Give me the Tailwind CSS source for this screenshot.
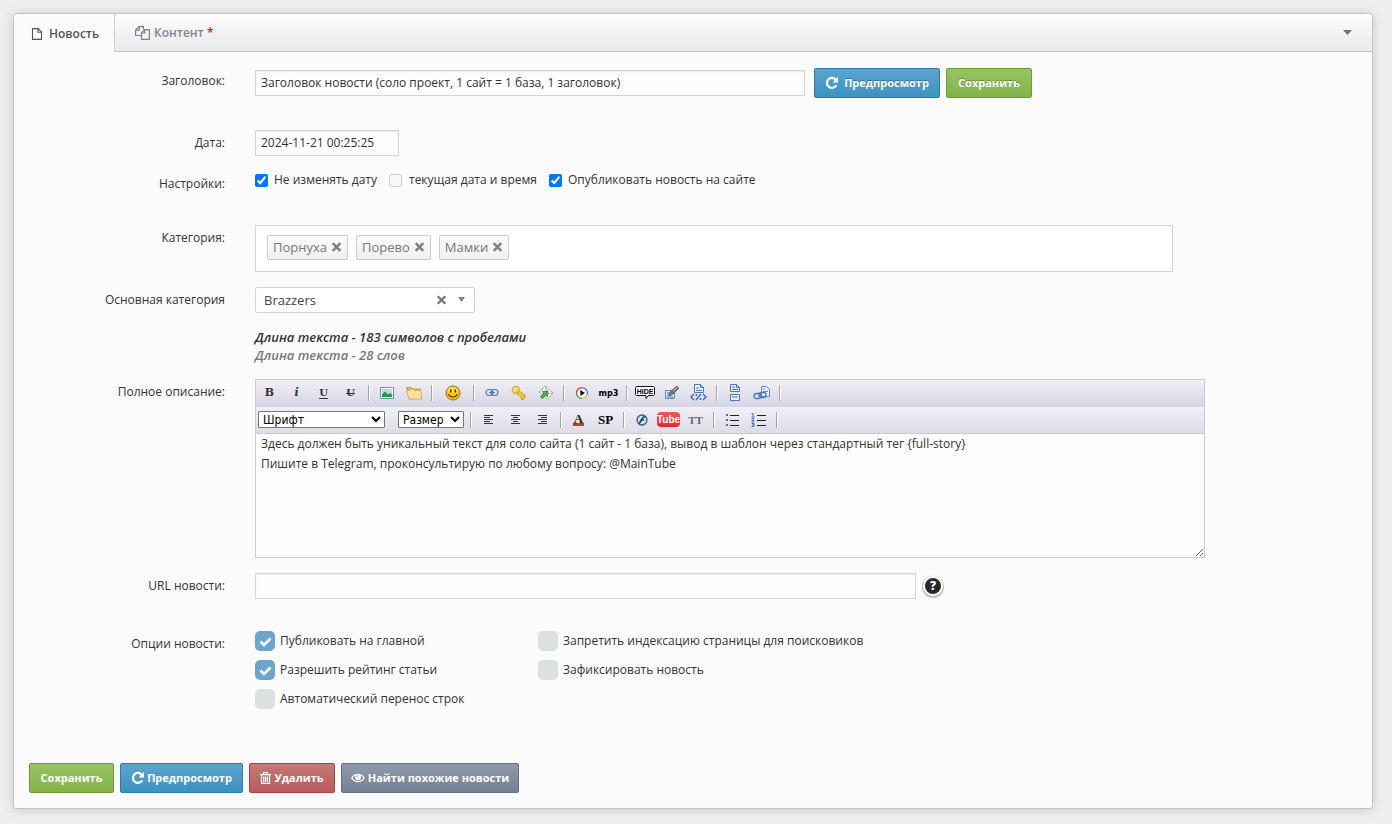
<!DOCTYPE html>
<html lang="ru">
<head>
<meta charset="utf-8">
<title>Редактирование новости</title>
<script src="https://cdn.jsdelivr.net/npm/@tailwindcss/browser@4"></script>
</head>
<body class="min-h-screen bg-[#efefef] px-[13px] pt-[13px] pb-4 text-[12px] leading-[18px] text-[#333]" style="font-family:'Open Sans','Noto Sans',sans-serif">
<main class="mr-[6px] rounded-[3px] border border-[#c5c5c5] bg-[#fbfbfb] shadow-[0_1px_12px_rgba(0,0,0,0.16)]">
  <header class="flex h-[38px] rounded-t-[3px] border-b border-[#c8c8c8] bg-linear-to-b from-[#fdfdfd] to-[#e9e9e9]">
    <button class="-mb-px flex w-[101px] items-center gap-1.5 rounded-tl-[3px] border-r border-[#cdcdcd] bg-[#fbfbfb] pt-px pl-[17px] font-semibold text-[#555]">
      <svg class="h-3 w-3" viewBox="0 0 12 12" fill="none" stroke="#555" stroke-width="1.1"><path d="M1.5.6h5.7l3.3 3.3v7.5h-9zM7 .8v3.4h3.4"/></svg>
      Новость
    </button>
    <button class="flex items-center gap-1 pt-px pl-5 font-semibold text-[#808690]">
      <svg class="h-3.5 w-[15px]" viewBox="0 0 15 14" fill="none" stroke="#7b8390" stroke-width="1.2"><path d="M6 9.500H.6V4L4 .6h4.400v3M4.200.8v3.400H.8M6.500 6.800 9.700 3.600h4.700v9.800H6.500zM9.900 3.800v3.200H6.700"/></svg>
      <span>Контент <span class="text-[#f00]">*</span></span>
    </button>
    <button aria-label="Меню" class="mr-5 ml-auto"><svg class="h-[5px] w-[9px]" viewBox="0 0 9 5"><path d="M0 0h9L4.500 5z" fill="#6b7482"/></svg></button>
  </header>

  <form class="px-[15px] pt-4 pb-[15px]">
    <div class="grid grid-cols-[196px_minmax(0,1fr)] gap-x-[30px]">
      <label for="title" class="pt-1 text-right">Заголовок:</label>
      <div class="mb-8 flex h-[30px] items-center">
        <input id="title" class="h-[26px] w-[550px] border border-[#d5d5d5] bg-[#fdfdfd] px-[5px] pb-px shadow-[inset_0_1px_1px_rgba(0,0,0,0.08)]" value="Заголовок новости (соло проект, 1 сайт = 1 база, 1 заголовок)">
        <button type="button" class="ml-[9px] flex h-[30px] w-[126px] items-center justify-center gap-[5px] rounded-[2px] border border-[#2f7ba5] bg-linear-to-b from-[#5ba5cc] to-[#3c92c1] text-[11px] font-bold text-white [text-shadow:0_-1px_0_rgba(0,0,0,0.3)]">
          <svg class="h-3.5 w-3.5" viewBox="0 0 14 14"><path d="M11.300 9.300A5 5 0 1 1 10.800 3.700" fill="none" stroke="#fff" stroke-width="2.200"/><path d="M13 1v5.500H7.500z" fill="#fff"/></svg>
          Предпросмотр</button>
        <button type="button" class="ml-1.5 h-[30px] w-[86px] rounded-[2px] border border-[#6f9a35] bg-linear-to-b from-[#98c363] to-[#82b447] text-[11px] font-bold text-white [text-shadow:0_-1px_0_rgba(0,0,0,0.3)]">Сохранить</button>
      </div>

      <label for="date" class="pt-1 text-right">Дата:</label>
      <div class="mb-[15px]"><input id="date" class="block h-[26px] w-36 border border-[#d5d5d5] bg-[#fdfdfd] px-[5px] pb-px shadow-[inset_0_1px_1px_rgba(0,0,0,0.08)]" value="2024-11-21 00:25:25"></div>

      <div class="pt-1 text-right">Настройки:</div>
      <div class="mb-9 flex h-[18px] items-center">
        <label class="flex items-center gap-1.5"><input type="checkbox" checked class="h-[13px] w-[13px]">Не изменять дату</label>
        <label class="ml-3 flex items-center gap-[7px]"><input type="checkbox" disabled class="h-[13px] w-[13px]">текущая дата и время</label>
        <label class="ml-3 flex items-center gap-1.5"><input type="checkbox" checked class="h-[13px] w-[13px]">Опубликовать новость на сайте</label>
      </div>

      <div class="pt-1 text-right">Категория:</div>
      <div class="mb-[15px] flex h-[47px] w-[918px] items-start gap-2 border border-[#d5d5d5] bg-white px-[11px] pt-[9px] text-[13px] text-[#777]">
        <span class="flex h-[25px] items-center gap-1 rounded-[2px] border border-[#ccc] bg-linear-to-b from-[#fbfbfb] to-[#f0f0f0] px-[5px] pb-px">Порнуха<button type="button" aria-label="Убрать Порнуха"><svg class="h-[10px] w-[11px]" viewBox="0 0 10 10"><path d="m1.200 1.200 7.600 7.600m0-7.600L1.200 8.800" stroke="#808080" stroke-width="2.500"/></svg></button></span>
        <span class="flex h-[25px] items-center gap-1 rounded-[2px] border border-[#ccc] bg-linear-to-b from-[#fbfbfb] to-[#f0f0f0] px-[5px] pb-px">Порево<button type="button" aria-label="Убрать Порево"><svg class="h-[10px] w-[11px]" viewBox="0 0 10 10"><path d="m1.200 1.200 7.600 7.600m0-7.600L1.200 8.800" stroke="#808080" stroke-width="2.500"/></svg></button></span>
        <span class="flex h-[25px] items-center gap-1 rounded-[2px] border border-[#ccc] bg-linear-to-b from-[#fbfbfb] to-[#f0f0f0] px-[5px] pb-px">Мамки<button type="button" aria-label="Убрать Мамки"><svg class="h-[10px] w-[11px]" viewBox="0 0 10 10"><path d="m1.200 1.200 7.600 7.600m0-7.600L1.200 8.800" stroke="#808080" stroke-width="2.500"/></svg></button></span>
      </div>

      <label for="maincat" class="pt-1 text-right">Основная категория</label>
      <div class="relative mb-[15px] h-[26px] w-[220px]">
        <select id="maincat" class="block h-[26px] w-full appearance-none rounded-[2px] border border-[#d5d5d5] bg-white px-2 text-[13px] text-[#444]"><option>Brazzers</option></select>
        <button type="button" aria-label="Очистить" class="absolute top-2 right-7"><svg class="block h-[10px] w-[11px]" viewBox="0 0 10 10"><path d="m1.200 1.200 7.600 7.600m0-7.600L1.200 8.800" stroke="#777" stroke-width="2.300"/></svg></button>
        <svg class="pointer-events-none absolute top-[10px] right-[10px] h-[5px] w-[7px]" viewBox="0 0 7 5"><path d="M0 0h7L3.500 5z" fill="#808080"/></svg>
      </div>

      <div></div>
      <div class="mb-[15px] text-[13px] font-semibold italic"><p>Длина текста - 183 символов с пробелами</p><p class="text-[#777]">Длина текста - 28 слов</p></div>

      <label for="story" class="pt-1 text-right">Полное описание:</label>
      <div class="mb-[15px] w-[950px] border border-[#ccc]">
        <div class="flex h-[27px] items-center bg-linear-to-b from-[#f1f0f7] to-[#d5d4e3] pb-0.5 text-[#333] [&>button]:flex [&>button]:h-[25px] [&>button]:w-[27px] [&>button]:shrink-0 [&>button]:items-center [&>button]:justify-center [&>i]:mx-1 [&>i]:h-4 [&>i]:w-px [&>i]:shrink-0 [&>i]:bg-[#a4a4ae] [&>i]:shadow-[1px_0_0_#fff]">
          <button type="button" aria-label="Жирный" class="font-['DejaVu_Serif'] text-[11px] font-bold">B</button>
          <button type="button" aria-label="Курсив" class="font-['DejaVu_Serif'] text-[11px] font-bold italic">i</button>
          <button type="button" aria-label="Подчёркнутый" class="font-['DejaVu_Serif'] text-[10px] font-bold underline underline-offset-2">U</button>
          <button type="button" aria-label="Зачёркнутый" class="font-['DejaVu_Serif'] text-[10px] font-bold line-through">U</button>
          <i></i>
          <button type="button" aria-label="Картинка"><svg width="14" height="14" viewBox="1 1 14 14"><path d="M1.500 2.500h13v11h-13z" fill="#fff" stroke="#6d93b5"/><path d="M3 4h10v8H3z" fill="#a9ddf6"/><circle cx="11" cy="5.500" r="1.500" fill="#ffd94a"/><path d="M3 12V9.500l3-3 3 3 2-1.500 2 1.500V12z" fill="#269a37"/></svg></button>
          <button type="button" aria-label="Файлы"><svg width="18" height="16" viewBox="0 0 18 16"><path d="M1.500 2.500h5l1.500 1.500h7.500v9h-11z" fill="#e3b767" stroke="#c99a4c"/><path d="m4 14-2.500-8.500h3l1-1.500h3l1 1.500h6.500l.5 8.500z" fill="#fae0a5" stroke="#d2a04d" stroke-width=".8"/></svg></button>
          <i></i>
          <button type="button" aria-label="Смайлы" class="mx-[3px]"><svg width="16" height="16" viewBox="0 0 16 16"><circle cx="8" cy="8" r="7" fill="#fbc70f" stroke="#a36b0b"/><ellipse cx="7.500" cy="5" rx="5" ry="3" fill="#ffe96b" opacity=".7"/><path d="M5.800 4.500v3M10.200 4.500v3" stroke="#4e3205" stroke-width="1.500"/><path d="M3.500 9c1.500 4 7.500 4 9 0" fill="none" stroke="#6b4308" stroke-width="1.200"/></svg></button>
          <i></i>
          <button type="button" aria-label="Ссылка"><svg width="14" height="9" viewBox="0 0 14 9" fill="none" stroke="#527fc0" stroke-width="1.200"><rect x="1" y="1.500" width="7" height="6" rx="3"/><rect x="6" y="1.500" width="7" height="6" rx="3"/><path d="M4 4.500h6"/></svg></button>
          <button type="button" aria-label="Ключ"><svg width="16" height="16" viewBox="0 0 16 16"><path d="m7.500 5.500 7 5-.5 2-1.500 0 0 2-2 0-.5-2.500-4-3z" fill="#f6c52c" stroke="#c78f16" stroke-width=".8"/><path d="M2 2.500 4.500 1l3 1 .8 3L6 8l-3 .5L1 6z" fill="#ffd64b" stroke="#c78f16" stroke-width=".8"/><circle cx="3.800" cy="3.900" r="1" fill="#fff"/></svg></button>
          <button type="button" aria-label="Защищённая ссылка"><svg width="16" height="16" viewBox="0 0 16 16"><path d="m7 1 8 7-5.500 6.500L1 7z" fill="#fff" stroke="#909aa2" stroke-width=".8"/><path d="m7 1 2.500 8 5.500-1" fill="none" stroke="#9ba5aa" stroke-width=".8"/><path d="m2.500 12 3.500-4-2-1.500 6-.5-.5 6L8 10l-3.500 3.500z" fill="#52a851" stroke="#2c7632" stroke-width=".7"/></svg></button>
          <i></i>
          <button type="button" aria-label="Видео"><svg width="12" height="12" viewBox="1 1 12 12" fill="none" stroke-width="1.400"><path d="M2 9A5.300 5.300 0 0 1 7 1.700" stroke="#e33931"/><path d="M7 1.700a5.300 5.300 0 0 1 5 7" stroke="#4276dc"/><path d="M12 8.700a5.300 5.300 0 0 1-5 3.600" stroke="#efc22f"/><path d="M7 12.300A5.300 5.300 0 0 1 2 9" stroke="#33a756"/><circle cx="7" cy="7" r="4.500" fill="#fff"/><path d="M5.300 4v6L10 7z" fill="#111"/></svg></button>
          <button type="button" class="font-['DejaVu_Sans_Condensed','DejaVu_Sans'] text-[9px] font-bold text-black">mp3</button>
          <i></i>
          <button type="button" aria-label="Скрытый текст"><svg width="22" height="15" viewBox="0 0 22 15" class="shrink-0"><path d="M2.500 1.500h17l1 1v7l-1 1h-5L12 13.500v-3H2.500l-1-1v-7z" fill="#fff" stroke="#111"/><text x="11" y="8.800" text-anchor="middle" font-family="Liberation Sans" font-size="7" font-weight="bold" fill="#000">HIDE</text></svg></button>
          <button type="button" aria-label="Цитата"><svg width="16" height="16" viewBox="0 0 16 16"><path d="M1.500 5.500h9v8h-9z" fill="#dce9fa" stroke="#648bc1"/><path d="M3 8h6M3 10h4M3 12h6" stroke="#4779bd"/><path d="m5 11 1-4L13 1l2 2-6 6z" fill="#777" stroke="#555" stroke-width=".8"/><path d="m9 6 5-4" stroke="#c4c4c4"/></svg></button>
          <button type="button" aria-label="Исходный код"><svg width="17" height="18" viewBox="0 0 17 18"><path d="M4.500.500h6l3 3v5h-9z" fill="#edf4fd" stroke="#4a77b9"/><path d="M10.500.500v3h3M6 4h3M6 6.500h6" fill="none" stroke="#4a77b9"/><path d="m4 10-3 3 3 3M13 10l3 3-3 3M6 16l5-6" fill="none" stroke="#3566ad" stroke-width="1.300"/><circle cx="6.500" cy="11" r="1" fill="#3566ad"/><circle cx="10.500" cy="15" r="1" fill="#3566ad"/></svg></button>
          <i></i>
          <button type="button" aria-label="Разрыв страницы"><svg width="12" height="18" viewBox="0 0 12 18" fill="#edf4fd" stroke="#4a77b9"><path d="M1.500.500h6l3 3v4h-9zM7.500.500v3h3M3 3h3M3 5.500h6M1.500 10.500h9v6h-9zM3 13h6"/></svg></button>
          <button type="button" aria-label="Ссылка на страницу"><svg width="18" height="16" viewBox="0 0 18 16"><path d="M8.500 1.500h5l3 3v7h-8z" fill="#e7f0fd" stroke="#648bc1"/><path d="M10 4h2M10 6.500h5" stroke="#648bc1"/><g fill="none" stroke="#4779bd" stroke-width="1.300"><rect x="1" y="8.500" width="7" height="5" rx="2.500"/><rect x="6" y="7.500" width="7" height="5" rx="2.500"/></g></svg></button>
          <i></i>
        </div>
        <div class="flex h-[27px] items-center border-b border-[#c8c8cd] bg-linear-to-b from-[#f1f0f7] to-[#dddce8] pb-px text-[#222] [&>button]:flex [&>button]:h-[25px] [&>button]:w-[27px] [&>button]:shrink-0 [&>button]:items-center [&>button]:justify-center [&>i]:mx-1 [&>i]:h-4 [&>i]:w-px [&>i]:shrink-0 [&>i]:bg-[#a4a4ae] [&>i]:shadow-[1px_0_0_#fff]">
          <select aria-label="Шрифт" class="ml-[2px] h-[17px] w-[127px] rounded-[1px] border border-[#767676] bg-white font-['DejaVu_Sans_Condensed','DejaVu_Sans'] text-[12px] text-black"><option>Шрифт</option></select>
          <select aria-label="Размер" class="mr-0.5 ml-[13px] h-[17px] w-[66px] rounded-[1px] border border-[#767676] bg-white font-['DejaVu_Sans_Condensed','DejaVu_Sans'] text-[12px] text-black"><option>Размер</option></select>
          <i></i>
          <button type="button" aria-label="По левому краю"><svg width="10" height="10" viewBox="0 0 10 10" stroke="#333"><path d="M0 .500h9M0 2.500h6M0 4.500h9M0 6.500h6M0 8.500h9"/></svg></button>
          <button type="button" aria-label="По центру"><svg width="10" height="10" viewBox="0 0 10 10" stroke="#333"><path d="M0 .500h9M2 2.500h5M0 4.500h9M2 6.500h5M0 8.500h9"/></svg></button>
          <button type="button" aria-label="По правому краю"><svg width="10" height="10" viewBox="0 0 10 10" stroke="#333"><path d="M0 .500h9M3 2.500h6M0 4.500h9M3 6.500h6M0 8.500h9"/></svg></button>
          <i></i>
          <button type="button" aria-label="Цвет"><span class="h-3 w-[11px] border-b-[3px] border-[#c73c25] text-center font-['Liberation_Serif'] text-[13px] leading-[9px] font-bold">A</span></button>
          <button type="button" class="font-['Liberation_Serif'] text-[13px] font-bold text-black">SP</button>
          <i></i>
          <button type="button" aria-label="Flash"><svg width="12" height="12" viewBox="0 0 12 12"><circle cx="6" cy="6" r="5" fill="#c9e1ec" stroke="#315f7b" stroke-width="1.300"/><path d="M3 9.500C5 9 5 3 9 2.500M5 6h3" fill="none" stroke="#173f57" stroke-width="1.700"/></svg></button>
          <button type="button"><span class="h-[15px] w-[23px] rounded-[4px] bg-linear-to-b from-[#f25555] to-[#e8242a] text-center font-['Liberation_Sans'] text-[10px] leading-[15px] font-bold text-white">Tube</span></button>
          <button type="button" class="font-['Liberation_Serif'] text-[11px] font-bold text-[#666]">TT</button>
          <i></i>
          <button type="button" aria-label="Список"><svg width="14" height="14" viewBox="0 0 14 14"><path d="M5 2.500h9M5 7.500h9M5 12.500h9" stroke="#222"/><path d="M1 1h2v2H1zM1 6h2v2H1zM1 11h2v2H1z" fill="#3f72b8"/></svg></button>
          <button type="button" aria-label="Нумерованный список"><svg width="15" height="14" viewBox="0 0 15 14"><path d="M6 2.500h9M6 7.500h9M6 12.500h9" stroke="#222"/><path d="M.5.500h1.500v3M.5 4H3.500M.5 5.500h2v2H1v1.500h2.500M.5 10.500h2.500v3H.5M1 12h2" fill="none" stroke="#3f72b8"/></svg></button>
          <i></i>
        </div>
        <textarea id="story" class="block h-[123px] w-full resize-y bg-[#fdfdfd] px-[5px] pt-0 text-[12px] leading-5 text-[#333]">Здесь должен быть уникальный текст для соло сайта (1 сайт - 1 база), вывод в шаблон через стандартный тег {full-story}
Пишите в Telegram, проконсультирую по любому вопросу: @MainTube</textarea>
      </div>

      <label for="url" class="pt-1 text-right">URL новости:</label>
      <div class="mb-8 flex h-[26px] items-center gap-[7px]"><input id="url" class="h-[26px] w-[661px] border border-[#d5d5d5] bg-[#fdfdfd] px-[5px] shadow-[inset_0_1px_1px_rgba(0,0,0,0.08)]"><button type="button" aria-label="Помощь" class="h-5 w-5 rounded-full border-2 border-white bg-[#292929] text-[12px] leading-4 font-extrabold text-white shadow-[0_1px_1px_1px_rgba(0,0,0,0.25)]">?</button></div>

      <div class="pt-1 text-right">Опции новости:</div>
      <div class="mb-[54px] grid w-[700px] grid-cols-[283px_minmax(0,1fr)] gap-y-[9px] [&_input]:h-5 [&_input]:w-5 [&_input]:shrink-0 [&_input]:appearance-none [&_input]:rounded-[5px] [&_input]:bg-[#dce0e0] [&_input]:checked:bg-[#6ca6cd] [&_label]:relative [&_label]:flex [&_label]:h-5 [&_label]:items-center [&_label]:gap-[5px] [&_label]:leading-5 [&_svg]:pointer-events-none [&_svg]:absolute [&_svg]:top-[5px] [&_svg]:left-1">
        <label><input type="checkbox" checked><svg width="13" height="11" viewBox="0 0 13 11"><path d="m1.500 5.500 3.500 3.500 6.500-6.500" fill="none" stroke="#fff" stroke-width="2.500"/></svg>Публиковать на главной</label>
        <label><input type="checkbox">Запретить индексацию страницы для поисковиков</label>
        <label><input type="checkbox" checked><svg width="13" height="11" viewBox="0 0 13 11"><path d="m1.500 5.500 3.500 3.500 6.500-6.500" fill="none" stroke="#fff" stroke-width="2.500"/></svg>Разрешить рейтинг статьи</label>
        <label><input type="checkbox">Зафиксировать новость</label>
        <label><input type="checkbox">Автоматический перенос строк</label>
      </div>
    </div>

    <div class="flex gap-1.5 text-[11px] font-bold text-white [text-shadow:0_-1px_0_rgba(0,0,0,0.3)]">
      <button type="button" class="h-[30px] w-[85px] rounded-[2px] border border-[#6f9a35] bg-linear-to-b from-[#98c363] to-[#82b447]">Сохранить</button>
      <button type="button" class="flex h-[30px] w-[123px] items-center justify-center gap-0.5 rounded-[2px] border border-[#2f7ba5] bg-linear-to-b from-[#5ba5cc] to-[#3c92c1]"><svg class="h-3.5 w-3.5" viewBox="0 0 14 14"><path d="M11.300 9.300A5 5 0 1 1 10.800 3.700" fill="none" stroke="#fff" stroke-width="2.200"/><path d="M13 1v5.500H7.500z" fill="#fff"/></svg>Предпросмотр</button>
      <button type="button" class="flex h-[30px] w-[86px] items-center justify-center gap-[3px] rounded-[2px] border border-[#a54646] bg-linear-to-b from-[#c77777] to-[#b95b5b]"><svg width="11" height="12" viewBox="0 0 11 12" fill="none" stroke="#fff" stroke-width="1.200"><path d="M0 2.600h11M3.500 2.500V.700h4v1.800M1.500 3v8.400h8V3M3.700 4.500v5.500M5.500 4.500v5.500M7.300 4.500v5.500"/></svg>Удалить</button>
      <button type="button" class="flex h-[30px] w-[178px] items-center justify-center gap-[3px] rounded-[2px] border border-[#667083] bg-linear-to-b from-[#8e99a9] to-[#758193]"><svg width="14" height="10" viewBox="0 0 14 10"><path d="M.8 5C3.800.200 10.200.200 13.200 5 10.200 9.800 3.800 9.800.8 5z" fill="none" stroke="#fff" stroke-width="1.300"/><circle cx="7" cy="4.300" r="3" fill="#fff"/><path d="M5.500 4.200A1.500 1.500 0 0 1 7 2.700" fill="none" stroke="#7c8899" stroke-width=".8"/></svg>Найти похожие новости</button>
    </div>
  </form>
</main>
</body>
</html>
